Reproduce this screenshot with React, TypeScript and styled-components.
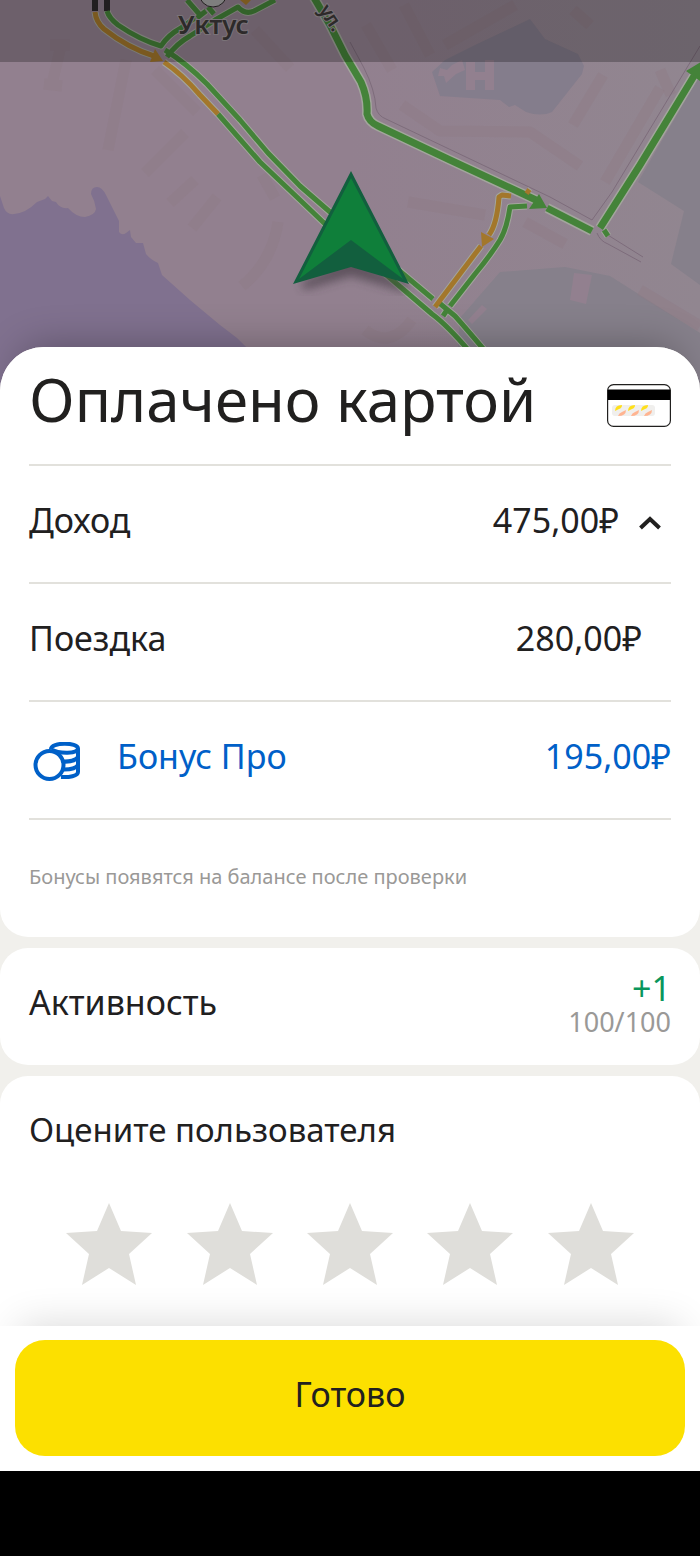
import React, { useState } from 'react';
import styled, { createGlobalStyle } from 'styled-components';

const GlobalStyle = createGlobalStyle`
  *, *::before, *::after { box-sizing: border-box; }
  body {
    margin: 0;
    background: #000;
    color: #21201f;
    font-family: 'Noto Sans', 'Open Sans', sans-serif;
  }
`;

const Screen = styled.div`
  display: flex;
  flex-direction: column;
  min-height: 100vh;
`;

const MapArea = styled.header`
  position: relative;
  height: 390px;
  overflow: hidden;
  background: #92808f;

  svg { display: block; width: 100%; height: 100%; }
`;

const StatusShade = styled.div`
  position: absolute;
  inset: 0 0 auto;
  height: 62px;
  background: rgba(0, 0, 0, 0.25);
`;

const Sheet = styled.main`
  position: relative;
  display: flex;
  flex-direction: column;
  gap: 11px;
  margin-top: -43px;
  border-radius: 44px 44px 0 0;
  background: #f1f0ec;
  box-shadow: 0 -20px 40px -20px rgba(0, 0, 0, 0.3);
`;

const Card = styled.section<{ $place?: 'top' | 'bottom' }>`
  padding: 0 29px;
  background: #fff;
  border-radius: ${(p) =>
    p.$place === 'top' ? '44px 44px 28px 28px' : p.$place === 'bottom' ? '28px 28px 0 0' : '28px'};
`;

const TitleRow = styled.div`
  display: flex;
  align-items: center;
  justify-content: space-between;
  height: 119px;
  padding-bottom: 14px;
  border-bottom: 2px solid #e2e1dc;

  svg { margin-top: 14px; }
`;

const Title = styled.h1`
  margin: 0;
  font-size: 60px;
  line-height: 80px;
  font-weight: 400;
`;

const Row = styled.div<{ $accent?: boolean }>`
  display: flex;
  align-items: center;
  height: 118px;
  padding-bottom: 8px;
  border-bottom: 2px solid #e2e1dc;
  font-size: 34px;
  line-height: 48px;
  color: ${(p) => (p.$accent ? '#0060c8' : '#21201f')};
`;

const RowToggle = styled(Row).attrs({ as: 'button' })`
  width: 100%;
  padding: 0 0 8px;
  border-width: 0 0 2px;
  background: none;
  font-family: inherit;
  text-align: left;
  cursor: pointer;
`;

const RowLabel = styled.span`
  flex: 1;
`;

const Amount = styled.span<{ $inset?: boolean }>`
  margin-right: ${(p) => (p.$inset ? '29px' : '0')};
`;

const Chevron = styled.svg<{ $open: boolean }>`
  margin: 6px 10px 0 20px;
  transform: ${(p) => (p.$open ? 'none' : 'rotate(180deg)')};
`;

const CoinsIcon = styled.svg`
  margin: 12px 36px 0 4px;
`;

const Note = styled.p`
  margin: 0;
  padding: 43px 0 46px;
  font-size: 20px;
  line-height: 28px;
  color: #9a9997;
`;

const Activity = styled.div`
  display: flex;
  align-items: center;
  justify-content: space-between;
  height: 117px;
  padding-bottom: 10px;
  font-size: 34px;
  line-height: 48px;
`;

const Score = styled.div`
  display: flex;
  flex-direction: column;
  align-items: flex-end;
  margin-top: 6px;
  line-height: 34px;
`;

const Gain = styled.span`
  color: #0a965c;
`;

const Total = styled.span`
  font-size: 27px;
  color: #9a9997;
`;

const Rating = styled.fieldset`
  display: grid;
  grid-template-columns: repeat(5, 1fr);
  margin: 0;
  padding: 29px 20px 41px;
  border: 0;
`;

const RatingTitle = styled.legend`
  float: left;
  grid-column: 1 / -1;
  margin: 0 0 48px -20px;
  padding: 0;
  font-size: 33px;
  line-height: 50px;
`;

const StarOption = styled.label<{ $on: boolean }>`
  display: grid;
  justify-items: center;
  cursor: pointer;
  color: ${(p) => (p.$on ? '#fce000' : '#dfdeda')};

  input, svg { grid-area: 1 / 1; }
  input { width: 86px; height: 82px; margin: 0; opacity: 0; }
`;

const Footer = styled.footer`
  position: relative;
  padding: 14px 15px 15px;
  background: #fff;
  box-shadow: 0 -20px 40px -20px rgba(0, 0, 0, 0.16);
`;

const DoneButton = styled.button`
  display: block;
  width: 100%;
  height: 116px;
  padding: 0 0 8px;
  border: 0;
  border-radius: 30px;
  background: #fce000;
  color: #21201f;
  font-family: inherit;
  font-size: 34px;
  line-height: 48px;
  cursor: pointer;
`;

const SystemBar = styled.div`
  flex: 1;
  min-height: 84px;
  background: #000;
`;

const GREEN_ROADS = [
  'M107 11 Q109 18 118 25 Q140 40 161 46 Q168 35 181 28 L195 18',
  'M167 57 Q176 44 190 36 L215 20 L238 7 Q245 15 254 11 L275 0',
  'M187 0 L201 16 M197 18 L206 11 M208 7 L214 14',
  'M165 50 Q186 63 207 84 L240 120 L268 153 L300 186 L330 212 L408 278 L433 299',
  'M218 114 L260 162 L300 200 L323 222 L390 278 L432 314 Q447 325 470 352',
  'M438 302 L455 316 Q464 326 486 352',
  'M527 206 L510 207 Q507 228 500 240 Q490 256 475 274 L450 306 M447 310 L443 316',
  'M604 230 L608 236',
];
const GREEN_AVENUES = [
  'M313 -4 L330 25 L345 55 L361 82 Q368 98 367 114 Q369 122 378 126 L450 160 L536 200',
  'M547 208 L592 231',
  'M600 228 L640 165 L694 76',
];
const ORANGE_ROADS = [
  'M95 12 Q96 22 104 29 Q128 48 154 56',
  'M164 62 Q182 74 200 95 L218 114',
  'M511 196 L502 195 L499 197 Q497 224 489 235',
  'M481 246 L435 307',
  'M526 190 L530 193',
];
const BUILDINGS = [
  'M126 60 L108 150', 'M155 70 L197 112', 'M185 133 L145 173', 'M195 180 L170 203', 'M217 197 L192 228',
  'M278 222 Q272 262 242 286', 'M262 175 L275 198', 'M366 25 L392 70', 'M404 5 L430 55', 'M445 45 L515 5',
  'M573 10 L590 25', 'M402 105 L440 131 L530 132 L580 166', 'M603 75 L573 125', 'M660 88 L605 182',
  'M408 202 L485 215', 'M525 222 L565 244', 'M50 45 L70 45 M60 50 L52 84 M44 84 L62 86',
  'M640 290 L700 326', 'M255 30 L290 68', 'M365 330 Q390 350 412 320', 'M671 95 L660 70',
];

function MapView() {
  return (
    <svg viewBox="0 0 700 390" preserveAspectRatio="xMidYMin slice" role="img" aria-label="Карта">
      <defs>
        <linearGradient id="ground" x1="0" y1="0" x2="1" y2="0">
          <stop offset="0" stopColor="#92808f" />
          <stop offset="0.5" stopColor="#92808f" />
          <stop offset="1" stopColor="#918690" />
        </linearGradient>
        <filter id="soft" x="-30%" y="-30%" width="160%" height="160%">
          <feGaussianBlur stdDeviation="5" />
        </filter>
      </defs>
      <rect width="700" height="390" fill="url(#ground)" />
      <path
        fill="#80718f"
        d="M0 196 L4 208 Q7 215 14 214 Q26 213 37 202 L45 199 L48 196 L52 201 L56 202 Q60 209 68 208 Q76 217 85 217 Q95 215 96 209 Q95 201 91 194 Q91 187 97 187 Q102 187 106 195 L119 221 L119 232 Q122 236 126 233 L130 230 L131 237 L136 243 L143 243 L146 254 Q151 260 158 263 L162 275 L190 300 L220 325 L237 338 L290 390 L0 390 Z"
      />
      <g fill="#86808b">
        <path fill="#847d8c" d="M530 19 L545 39 L578 54 L584 66 L582 74 L552 112 Q541 117 526 112 L515 105 L509 107 L500 100 L440 96 L437 87 L432 72 L445 60 L475 45 Z" />
        <path d="M700 75 L638 182 L684 211 L671 264 L700 285 Z" />
        <path d="M500 272 L565 267 L610 276 L700 333 L700 390 L455 390 L460 318 Z" />
      </g>
      <g fill="#92808f">
        <path d="M466 62 H475 V72 H485 V60 H494 V90 H485 V80 H475 V90 H466 Z" />
        <path d="M440 68 L447 70 L452 65 L462 60 L465 70 L456 74 L446 83 L444 76 L438 76 Z" />
        <path d="M574 273 L592 275 L586 304 L570 300 Z" />
        <path d="M482 305 L487 309 L472 324 L468 320 Z" />
      </g>
      <g fill="none" stroke="#8f7a85" strokeOpacity="0.4" strokeWidth="11" strokeLinejoin="round">
        {BUILDINGS.map((d) => <path key={d} d={d} />)}
      </g>
      <path
        fill="none" stroke="#7d6c7b" strokeWidth="1"
        d="M350 42 L364 68 Q375 90 376 108 Q378 116 386 119 L550 197 L592 220 L612 192 L700 46 M597 233 Q600 241 608 244 L641 262 M603 232 L643 257"
      />

      <g fill="none" stroke="#a3a69d" strokeLinejoin="round">
        <g strokeWidth="7">
          {[...GREEN_ROADS, ...ORANGE_ROADS].map((d) => <path key={d} d={d} />)}
        </g>
        <g strokeWidth="10">
          {GREEN_AVENUES.map((d) => <path key={d} d={d} />)}
        </g>
      </g>
      <path d="M95 0 V11 M107 0 V11" stroke="#2e2a2b" strokeWidth="6" />
      <g fill="none" stroke="#448339" strokeLinejoin="round">
        <g strokeWidth="5">{GREEN_ROADS.map((d) => <path key={d} d={d} />)}</g>
        <g strokeWidth="7">{GREEN_AVENUES.map((d) => <path key={d} d={d} />)}</g>
      </g>
      <g fill="none" stroke="#a3772b" strokeWidth="5" strokeLinejoin="round">
        {ORANGE_ROADS.map((d) => <path key={d} d={d} />)}
      </g>
      <path fill="#448339" d="M539 194 L547 208 L529 209 Z M686 71 L704 60 L703 83 Z" />
      <path fill="#a3772b" d="M155 49 L163 61 L150 62 Z M481 232 L494 239 L482 247 Z M240 0 L246 5 L251 0 Z" />
      <circle cx="213" cy="-7" r="14" fill="#a9a8a8" stroke="#2e2a2b" strokeWidth="1" />
      <g
        fill="#3d3938" stroke="#a39aa0" strokeWidth="2" paintOrder="stroke" fontWeight="600"
        fontFamily="'Noto Sans', sans-serif"
      >
        <text x="178" y="34" fontSize="26">Уктус</text>
        <text x="0" y="0" fontSize="20" transform="translate(318 10) rotate(56)">ул.</text>
      </g>

      <path d="M303 286 L351 272 L406 288 L351 262 Z" fill="#3d343d" stroke="#3d343d" strokeWidth="8" opacity="0.6" filter="url(#soft)" />
      <path d="M351 171 L409 284 L351 267 L293 284 Z" fill="#125f3e" />
      <path d="M351 178 L403 279 L351 240 L299 279 Z" fill="#0f7f3a" />
    </svg>
  );
}

function BankCard() {
  return (
    <svg width="64" height="43" viewBox="0 0 64 43" aria-hidden="true">
      <rect x="0.6" y="0.6" width="62.8" height="41.8" rx="6" fill="#fff" stroke="#21201f" strokeWidth="1.2" />
      <path d="M1 5.5 H63 V16 H1 Z" fill="#000" />
      <rect x="5" y="21" width="43" height="11" rx="3" fill="#f0efed" />
      {[0, 13, 26].map((x) => (
        <g key={x} transform={`translate(${x} 0)`}>
          <path d="M8 27 Q8 21 15 21 Q15 24 12 25 Q10 26 8 27 Z" fill="#ffe01a" />
          <path d="M19 26 Q19 32 11 32 Q12 29 15 28 Z" fill="#ffb491" />
        </g>
      ))}
    </svg>
  );
}

function Star() {
  return (
    <svg width="86" height="82" viewBox="0 0 86 82" fill="currentColor" aria-hidden="true">
      <path d="M43 0 L55 28 L86 30 L63 51 L70 82 L43 65 L16 82 L23 51 L0 30 L31 28 Z" />
    </svg>
  );
}

export default function App() {
  const [open, setOpen] = useState(true);
  const [rating, setRating] = useState(0);

  return (
    <>
      <GlobalStyle />
      <Screen>
        <MapArea>
          <MapView />
          <StatusShade />
        </MapArea>
        <Sheet>
          <Card $place="top">
            <TitleRow>
              <Title>Оплачено картой</Title>
              <BankCard />
            </TitleRow>
            <RowToggle aria-expanded={open} onClick={() => setOpen(!open)}>
              <RowLabel>Доход</RowLabel>
              <Amount>475,00₽</Amount>
              <Chevron $open={open} width="22" height="14" viewBox="0 0 22 14" fill="none" aria-hidden="true">
                <path d="M1.5 12 L11 3 L20.5 12" stroke="#21201f" strokeWidth="4" />
              </Chevron>
            </RowToggle>
            {open && (
              <>
                <Row>
                  <RowLabel>Поездка</RowLabel>
                  <Amount $inset>280,00₽</Amount>
                </Row>
                <Row $accent>
                  <CoinsIcon
                    width="48" height="40" viewBox="0 0 48 40" fill="none"
                    stroke="#0060c8" strokeWidth="4" aria-hidden="true"
                  >
                    <path d="M18 7 C18 0 45 0 45 6.5 C45 12 26 12 18.5 7.5" />
                    <path d="M45 6.5 V30 C45 34 36 35.5 28 35" />
                    <path d="M29 19.5 C36 20 43 18.5 45 15 M31 27.5 C37 27.5 43 26.5 45 23" />
                    <circle cx="16.500" cy="23" r="14" fill="#fff" />
                  </CoinsIcon>
                  <RowLabel>Бонус Про</RowLabel>
                  <Amount>195,00₽</Amount>
                </Row>
              </>
            )}
            <Note>Бонусы появятся на балансе после проверки</Note>
          </Card>

          <Card>
            <Activity>
              <span>Активность</span>
              <Score>
                <Gain>+1</Gain>
                <Total>100/100</Total>
              </Score>
            </Activity>
          </Card>

          <Card $place="bottom">
            <Rating>
              <RatingTitle>Оцените пользователя</RatingTitle>
              {[1, 2, 3, 4, 5].map((value) => (
                <StarOption key={value} $on={value <= rating}>
                  <input
                    type="radio" name="rating" value={value} aria-label={`${value} из 5`}
                    checked={rating === value} onChange={() => setRating(value)}
                  />
                  <Star />
                </StarOption>
              ))}
            </Rating>
          </Card>
        </Sheet>
        <Footer>
          <DoneButton type="button">Готово</DoneButton>
        </Footer>
        <SystemBar />
      </Screen>
    </>
  );
}
